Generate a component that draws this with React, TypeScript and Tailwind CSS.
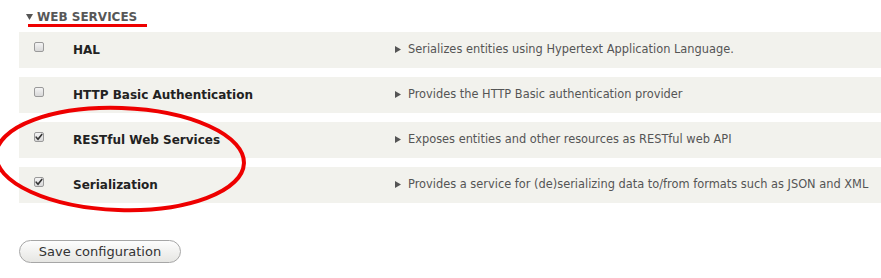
import React from "react";

type Row = { name: string; desc: string; checked: boolean };

const rows: Row[] = [
  { name: "HAL", desc: "Serializes entities using Hypertext Application Language.", checked: false },
  { name: "HTTP Basic Authentication", desc: "Provides the HTTP Basic authentication provider", checked: false },
  { name: "RESTful Web Services", desc: "Exposes entities and other resources as RESTful web API", checked: true },
  { name: "Serialization", desc: "Provides a service for (de)serializing data to/from formats such as JSON and XML", checked: true },
];

function Checkbox({ checked }: { checked: boolean }) {
  return (
    <span className="flex h-[10px] w-[10px] items-center justify-center rounded-[2px] border border-[#9a9a9a] bg-gradient-to-b from-[#f4f4f4] to-[#d8d8d8]">
      {checked && (
        <svg width="8" height="8" viewBox="0 0 8 8">
          <path d="M1.2 4.2 L3 6.2 L6.8 1.4" stroke="#333" strokeWidth="1.6" fill="none" strokeLinecap="round" />
        </svg>
      )}
    </span>
  );
}

export default function App() {
  return (
    <div className="relative h-[278px] w-[881px] overflow-hidden bg-white pl-[19px] font-['DejaVu_Sans',sans-serif]">
      <div className="relative h-[32px] pt-[9px]">
        <div className="flex items-center text-[12px] font-bold uppercase leading-4 text-[#575757]">
          <svg width="7" height="6" viewBox="0 0 7 6" className="ml-[7px] mr-[4px]">
            <path d="M0 0 L7 0 L3.5 6 Z" fill="#555" />
          </svg>
          <span>Web services</span>
        </div>
        <div className="absolute left-[9px] top-[24px] h-[3px] w-[119px] bg-[#ee0000]" />
      </div>

      <div className="flex flex-col gap-[9px]">
        {rows.map((r) => (
          <div key={r.name} className="flex h-[36px] items-center bg-[#f2f2ed]">
            <div className="ml-[15px] w-[39px] self-start pt-[10px]">
              <Checkbox checked={r.checked} />
            </div>
            <div className="w-[322px] text-[12px] font-bold text-[#222]">{r.name}</div>
            <div className="flex items-center text-[11.4px] text-[#555]">
              <svg width="6" height="7" viewBox="0 0 6 7" className="mr-[7px]">
                <path d="M0 0 L6 3.5 L0 7 Z" fill="#555" />
              </svg>
              <span>{r.desc}</span>
            </div>
          </div>
        ))}
      </div>

      <div className="mt-[36px]">
        <button className="h-[23px] w-[162px] rounded-full border border-[#a6a6a6] bg-gradient-to-b from-[#fdfdfd] to-[#e6e6e3] text-[13px] leading-none text-[#333]">
          Save configuration
        </button>
      </div>

      <svg className="pointer-events-none absolute left-0 top-0" width="881" height="278">
        <ellipse cx="120" cy="159" rx="124" ry="51" transform="rotate(2 120 159)" fill="none" stroke="#ee0000" strokeWidth="4" />
      </svg>
    </div>
  );
}
